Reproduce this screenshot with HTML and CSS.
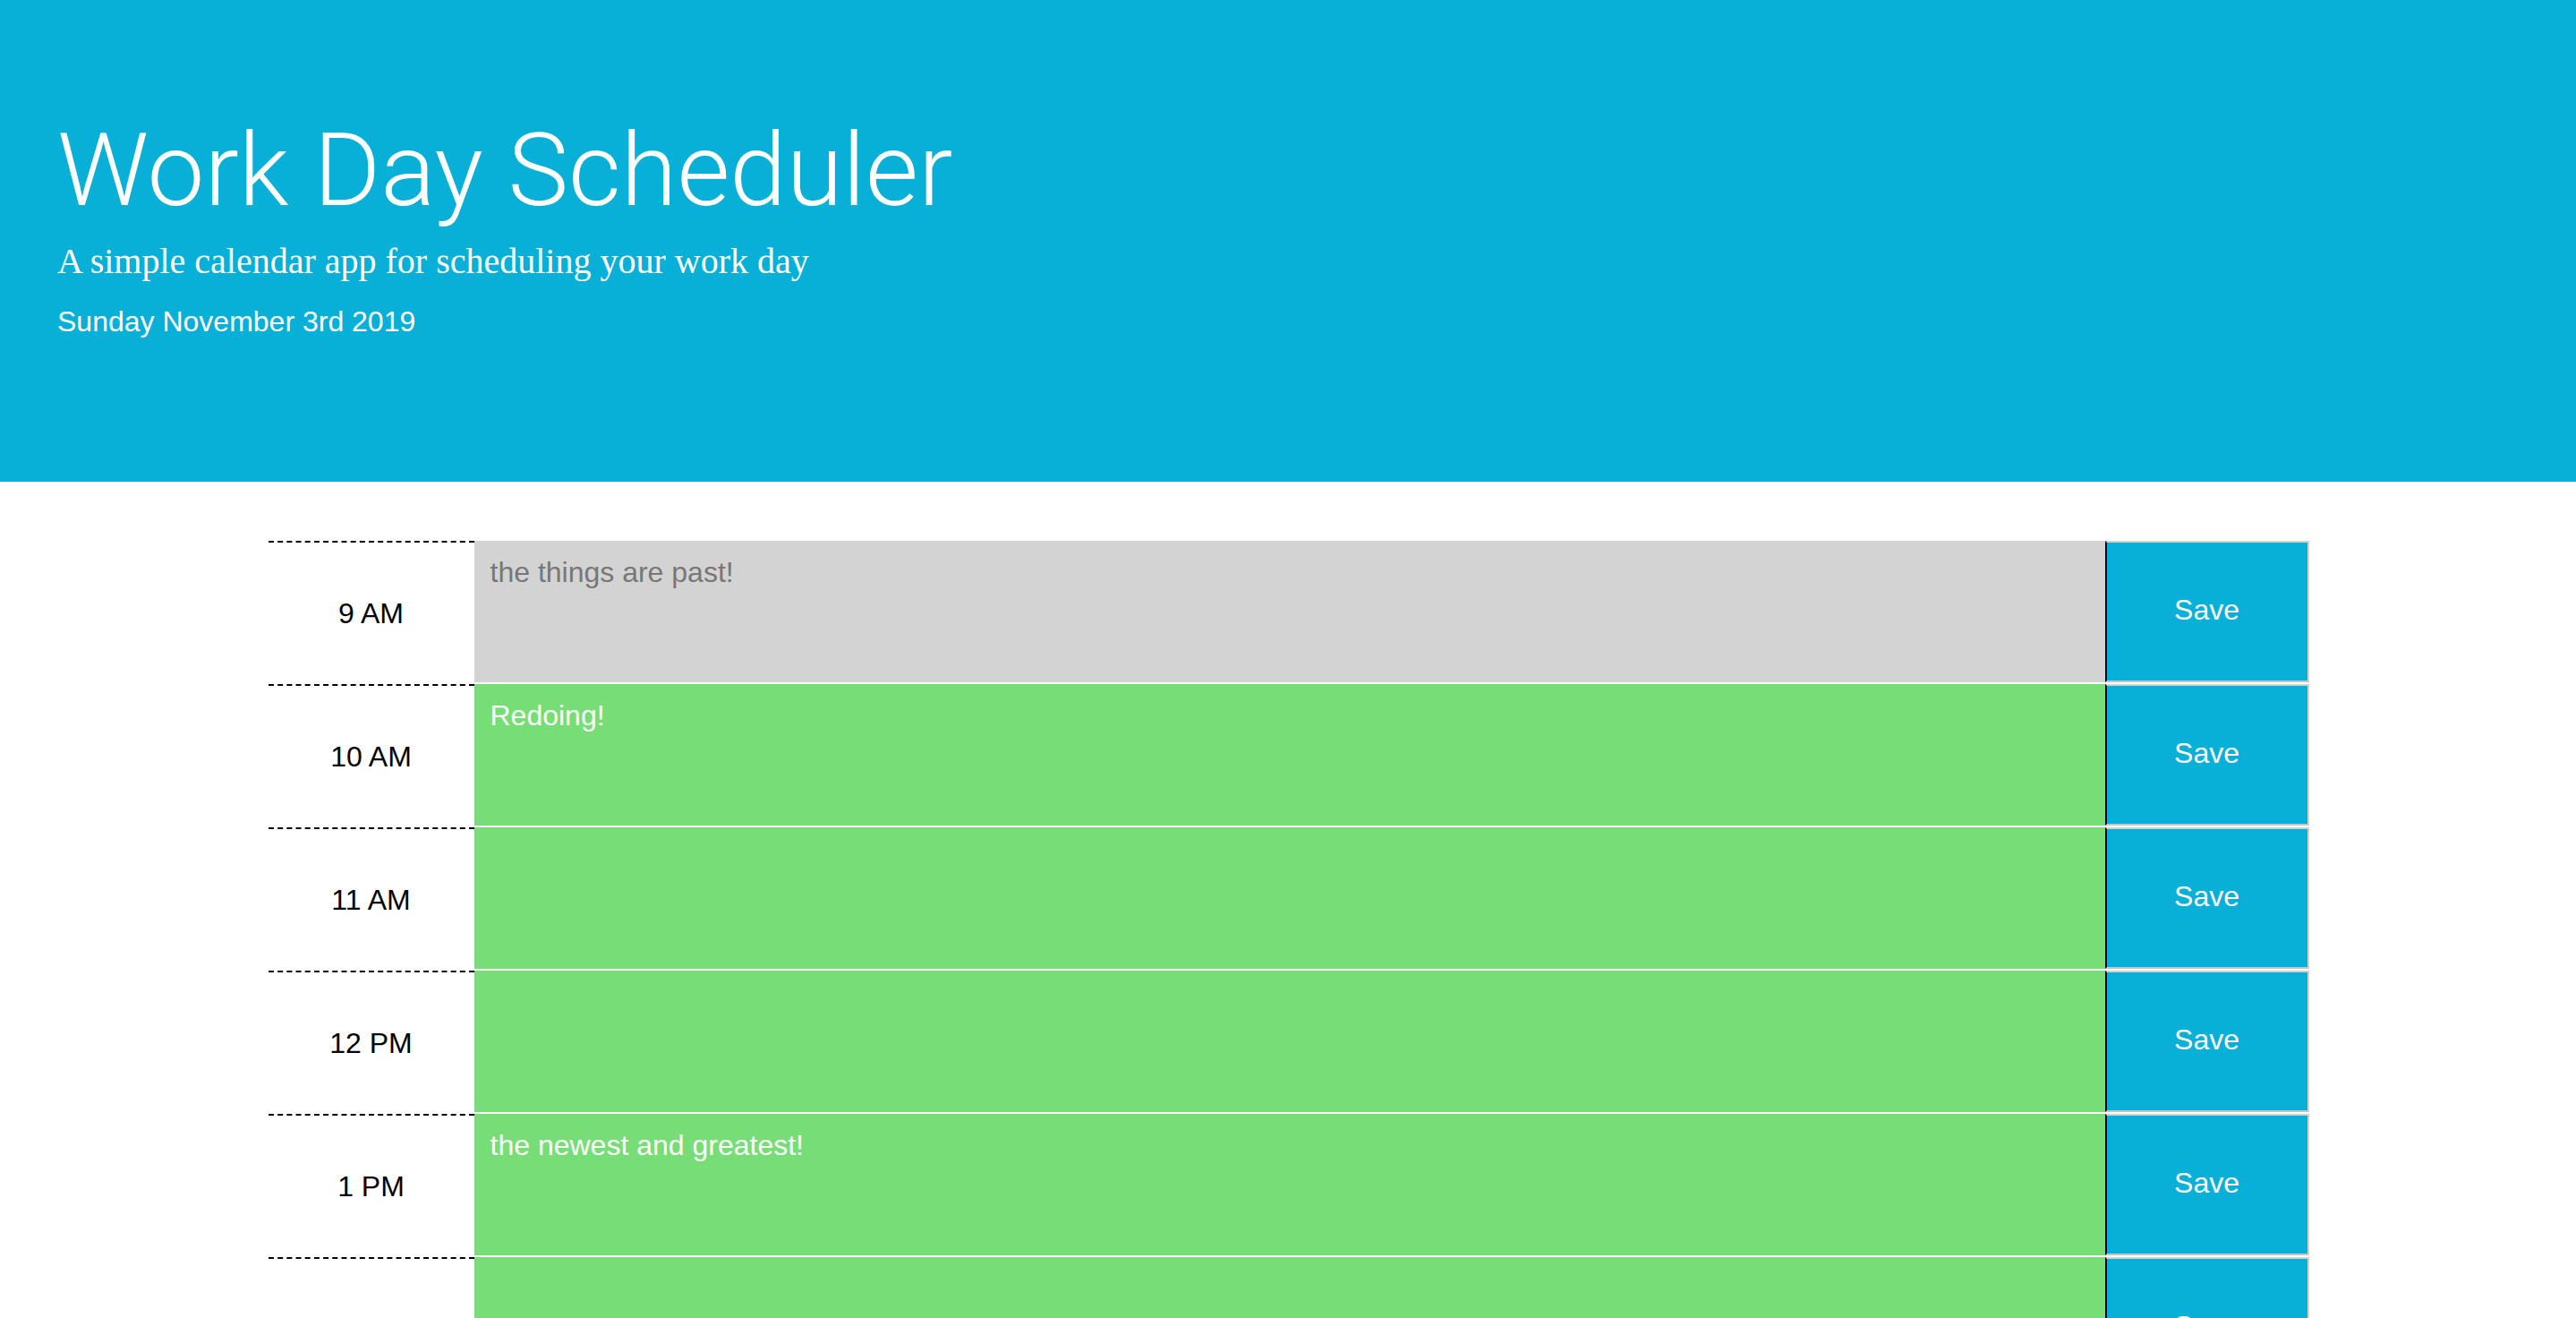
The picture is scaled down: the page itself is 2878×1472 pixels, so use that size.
FILE: index.html
```html
<!DOCTYPE html>
<html lang="en">
<head>
<meta charset="UTF-8">
<title>Work Day Scheduler</title>
<link rel="stylesheet" href="styles.css">
</head>
<body>
<header class="jumbotron">
  <h1 class="title">Work Day Scheduler</h1>
  <p class="lead">A simple calendar app for scheduling your work day</p>
  <p class="current-day">Sunday November 3rd 2019</p>
</header>
<main class="container">
  <div class="time-block">
    <div class="hour">9 AM</div>
    <textarea class="description past">the things are past!</textarea>
    <button class="save-btn">Save</button>
  </div>
  <div class="time-block">
    <div class="hour">10 AM</div>
    <textarea class="description future">Redoing!</textarea>
    <button class="save-btn">Save</button>
  </div>
  <div class="time-block">
    <div class="hour">11 AM</div>
    <textarea class="description future"></textarea>
    <button class="save-btn">Save</button>
  </div>
  <div class="time-block">
    <div class="hour">12 PM</div>
    <textarea class="description future"></textarea>
    <button class="save-btn">Save</button>
  </div>
  <div class="time-block">
    <div class="hour">1 PM</div>
    <textarea class="description future">the newest and greatest!</textarea>
    <button class="save-btn">Save</button>
  </div>
  <div class="time-block">
    <div class="hour">2 PM</div>
    <textarea class="description future"></textarea>
    <button class="save-btn">Save</button>
  </div>
</main>
</body>
</html>
```

FILE: styles.css
```css
html, body {
  margin: 0;
  padding: 0;
}

body {
  font-family: "Liberation Sans", Arial, sans-serif;
  color: #000;
  background: #fff;
}

.jumbotron {
  background: #08afd6;
  color: #fff;
  height: 538px;
  box-sizing: border-box;
  padding: 123px 64px 0 64px;
}

.title {
  margin: 0;
  font-family: Roboto, "Liberation Sans", sans-serif;
  font-weight: 300;
  font-size: 114px;
  line-height: 134px;
}

.lead {
  margin: 5px 0 0 0;
  font-family: "Liberation Serif", "Times New Roman", serif;
  font-size: 40px;
  line-height: 60px;
}

.current-day {
  margin: 13px 0 0 0;
  font-size: 32px;
  line-height: 48px;
}

.container {
  width: 2280px;
  margin: 66px auto 0 auto;
  padding-left: 1px;
}

.time-block {
  display: flex;
  height: 160px;
}

.hour {
  width: 230px;
  flex: none;
  box-sizing: border-box;
  border-top: 2px dashed #000;
  display: flex;
  align-items: center;
  justify-content: center;
  font-size: 32px;
  padding-top: 1px;
}

.description {
  flex: 1;
  height: 160px;
  box-sizing: border-box;
  margin: 0;
  border: none;
  border-bottom: 2px solid #fff;
  padding: 17px 18px;
  font-family: "Liberation Sans", Arial, sans-serif;
  font-size: 32px;
  line-height: normal;
  resize: none;
  outline: none;
  color: #fff;
}

.past {
  background: #d3d3d3;
  color: #777;
}

.future {
  background: #77dd77;
}

.save-btn {
  width: 228px;
  flex: none;
  height: 158px;
  box-sizing: border-box;
  margin: 0;
  padding: 0 0 4px 0;
  border: 2px solid #d2d2d2;
  border-bottom-color: #c6c6c6;
  border-left: 2px solid #000;
  background: #08afd6;
  color: #fff;
  font-family: "Liberation Sans", Arial, sans-serif;
  font-size: 32px;
  cursor: pointer;
}
```
